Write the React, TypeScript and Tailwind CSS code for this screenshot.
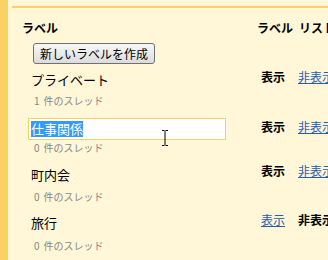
const font = { fontFamily: '"Noto Sans CJK JP", "Noto Sans", sans-serif' }

type Row = {
  name: string
  count: string
  shown: boolean
  editing?: boolean
  gap: string
  nameGap: string
  rightShift: string
}

const rows: Row[] = [
  { name: 'プライベート', count: '1', shown: true, gap: 'mt-[8px]', nameGap: 'mt-[7px]', rightShift: '-mt-[3px]' },
  { name: '仕事関係', count: '0', shown: true, editing: true, gap: 'mt-[11px]', nameGap: 'mt-[2px]', rightShift: 'mt-[1px]' },
  { name: '町内会', count: '0', shown: true, gap: 'mt-[13px]', nameGap: 'mt-[8px]', rightShift: '-mt-[4px]' },
  { name: '旅行', count: '0', shown: false, gap: 'mt-[12px]', nameGap: 'mt-[9px]', rightShift: '-mt-[3px]' },
]

function ShowHide({ shown }: { shown: boolean }) {
  return (
    <div className="flex pl-[4px] text-[12px] leading-[16px] whitespace-nowrap">
      {shown ? (
        <span className="font-bold text-black">表示</span>
      ) : (
        <span className="text-[#2a5db0] underline">表示</span>
      )}
      {shown ? (
        <span className="ml-[13px] text-[#2a5db0] underline">非表示</span>
      ) : (
        <span className="ml-[13px] font-bold text-black">非表示</span>
      )}
    </div>
  )
}

export default function App() {
  return (
    <div className="relative flex w-[328px] h-[260px] overflow-hidden bg-[#fff7d7]" style={font}>
      {/* left stripe */}
      <div className="w-[8px] shrink-0 bg-[#fad163]" />

      <div className="flex-1 min-w-0 pl-[4px]">
        <div className="mt-[6px] border-t-2 border-[#fad163]">
          {/* header */}
          <div className="flex pt-[12px] text-[12px] leading-[16px] font-bold text-black whitespace-nowrap">
            <div className="w-[245px] shrink-0 pl-[10px]">ラベル</div>
            <div className="flex">
              <span>ラベル</span>
              <span className="ml-[6px]">リスト</span>
            </div>
          </div>

          {/* create button */}
          <div className="mt-[7px] pl-[21px]">
            <button className="block h-[21px] w-[122px] rounded-[3px] border border-[#707070] bg-gradient-to-b from-[#f8f8f8] to-[#dcdcdc] text-[12px] leading-[16px] text-black">
              新しいラベルを作成
            </button>
          </div>

          {rows.map((r) => (
            <div key={r.name} className={`flex ${r.gap}`}>
              <div className="w-[245px] shrink-0">
                {r.editing ? (
                  <div className="ml-[16px] flex h-[22px] w-[198px] items-center border border-[#f5cf68] bg-white pl-[2px]">
                    <span className="bg-[#3399ff] text-[13px] leading-[16px] text-white">{r.name}</span>
                  </div>
                ) : (
                  <div className="pl-[19px] text-[13px] leading-[16px] text-black">{r.name}</div>
                )}
                <div className={`${r.nameGap} flex pl-[22px] text-[10px] leading-[12px] text-[#888]`}>
                  <span>{r.count}</span>
                  <span className="ml-[4px]">件のスレッド</span>
                </div>
              </div>
              <div className={r.rightShift}>
                <ShowHide shown={r.shown} />
              </div>
            </div>
          ))}
        </div>
      </div>

      {/* text cursor over the field */}
      <svg className="absolute left-[160px] top-[128px]" width="10" height="20" viewBox="0 0 10 20">
        <path d="M2 2.5H4.5M5.5 2.5H8M5 3V17M2 17.5H4.5M5.5 17.5H8" stroke="#000" strokeWidth="1" fill="none" />
      </svg>
    </div>
  )
}
